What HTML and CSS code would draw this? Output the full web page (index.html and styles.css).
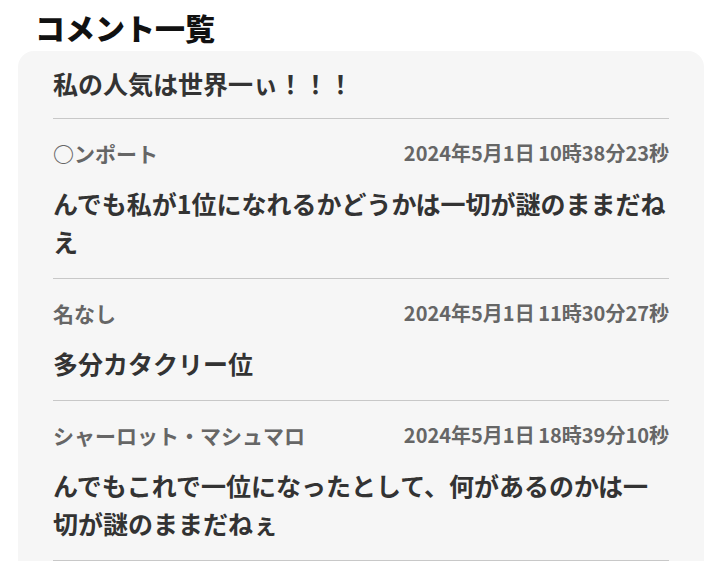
FILE: index.html
```html
<!DOCTYPE html>
<html lang="ja">
<head>
  <meta charset="UTF-8">
  <title>コメント一覧</title>
  <link rel="stylesheet" href="styles.css">
</head>
<body>
  <h1>コメント一覧</h1>
  <div class="comment-box">
    <div class="post-title">私の人気は世界一ぃ！！！</div>

    <div class="comment">
      <div class="comment-head">
        <span class="name">○ンポート</span>
        <span class="date">2024年5月1日 10時38分23秒</span>
      </div>
      <div class="comment-text">んでも私が1位になれるかどうかは一切が謎のままだねえ</div>
    </div>

    <div class="comment">
      <div class="comment-head">
        <span class="name">名なし</span>
        <span class="date">2024年5月1日 11時30分27秒</span>
      </div>
      <div class="comment-text">多分カタクリー位</div>
    </div>

    <div class="comment">
      <div class="comment-head">
        <span class="name">シャーロット・マシュマロ</span>
        <span class="date">2024年5月1日 18時39分10秒</span>
      </div>
      <div class="comment-text">んでもこれで一位になったとして、何があるのかは一切が謎のままだねぇ</div>
    </div>
  </div>
</body>
</html>
```

FILE: styles.css
```css
body {
  margin: 0 16px 0 18px;
  font-family: "Noto Sans CJK JP", "Noto Sans", sans-serif;
  background-color: #fff;
  color: #333;
}
h1 {
  margin: 6px 0 3px 17px;
  font-size: 30px;
  line-height: 42px;
  font-weight: 900;
  color: #111;
}
.comment-box {
  background-color: #f6f6f6;
  border-radius: 16px;
  padding: 12px 35px 20px;
}
.post-title {
  font-size: 25px;
  line-height: 40px;
  font-weight: bold;
  padding-bottom: 15px;
  border-bottom: 1px solid #c8c8c8;
}
.comment {
  padding: 20px 0 18px;
  border-bottom: 1px solid #c8c8c8;
}
.comment-head {
  display: flex;
  justify-content: space-between;
  align-items: center;
  color: #666;
  font-weight: bold;
  line-height: 28px;
  margin-bottom: 17px;
}
.name {
  font-size: 21px;
}
.date {
  font-size: 20px;
  word-spacing: -1px;
}
.comment-text {
  font-size: 25px;
  line-height: 38px;
  font-weight: bold;
  color: #333;
}
```
